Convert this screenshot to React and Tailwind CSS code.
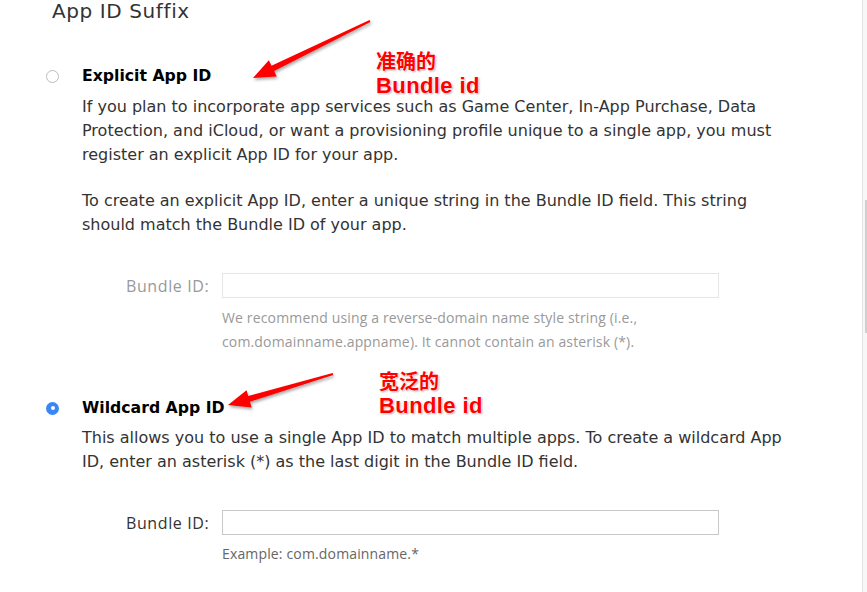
import React from 'react';

const Arrow = ({ x1, y1, x2, y2 }) => {
    // tapered shaft from tail (x1,y1) to tip (x2,y2) with a head
    const dx = x2 - x1;
    const dy = y2 - y1;
    const len = Math.hypot(dx, dy);
    const ux = dx / len;
    const uy = dy / len;
    const nx = -uy;
    const ny = ux;
    const headLen = 22;
    const headW = 9;
    const bx = x2 - ux * headLen;
    const by = y2 - uy * headLen;
    const pts = [
        [x1 + nx * 1, y1 + ny * 1],
        [bx + nx * 3, by + ny * 3],
        [bx + nx * headW, by + ny * headW],
        [x2, y2],
        [bx - nx * headW, by - ny * headW],
        [bx - nx * 3, by - ny * 3],
        [x1 - nx * 1, y1 - ny * 1],
    ].map(p => p.join(',')).join(' ');
    return (
        <svg className="absolute left-0 top-0 pointer-events-none" width="867" height="592">
            <defs>
                <filter id={`sh${x1}`} x="-20%" y="-20%" width="140%" height="140%">
                    <feDropShadow dx="1" dy="2" stdDeviation="1.5" floodColor="#000" floodOpacity="0.35" />
                </filter>
            </defs>
            <polygon points={pts} fill="#ff0000" filter={`url(#sh${x1})`} />
        </svg>
    );
};

const Note = ({ top, left, cn }) => (
    <div
        className="absolute text-[#ff0000] font-bold"
        style={{ top, left, textShadow: '0 0 2px #fff, 0 0 2px #fff, 1px 1px 2px #999' }}
    >
        <div className="text-[20px] leading-[28px] font-['Noto_Sans_CJK_SC',sans-serif]">{cn}</div>
        <div className="text-[22px] leading-[22px] font-['Liberation_Sans',Arial,sans-serif] tracking-[0.4px]">Bundle id</div>
    </div>
);

const App = () => {
    return (
        <div className="relative w-[867px] h-[592px] overflow-hidden bg-white font-['DejaVu_Sans',sans-serif] text-[#333]">
            <div className="flex h-full">
                <div className="flex-1">
                    <h2 className="pl-[52px] -mt-[3px] text-[20px] tracking-[0.6px] leading-[28px] text-[#333]">App ID Suffix</h2>

                    <div className="mt-[39px] flex items-center h-[24px]">
                        <span className="ml-[46px] w-[13px] h-[13px] rounded-full border border-[#bdbdbd] bg-white" />
                        <span className="ml-[23px] text-[15.7px] font-bold text-black">Explicit App ID</span>
                    </div>
                    <div className="pl-[82px] text-[16px] leading-[24px] text-[#333] mt-[7px]">
                        <p>If you plan to incorporate app services such as Game Center, In-App Purchase, Data<br />Protection, and iCloud, or want a provisioning profile unique to a single app, you must<br />register an explicit App ID for your app.</p>
                        <p className="mt-[22px]">To create an explicit App ID, enter a unique string in the Bundle ID field. This string<br />should match the Bundle ID of your app.</p>
                    </div>
                    <div className="mt-[36px] flex items-center">
                        <label className="ml-[126px] w-[84px] shrink-0 whitespace-nowrap font-['Open_Sans',sans-serif] text-[16px] tracking-[0.6px] text-[#999]">Bundle ID:</label>
                        <div className="ml-[12px] w-[497px] h-[25px] border border-[#e6e6e6] bg-white" />
                    </div>
                    <p className="pl-[222px] mt-[8px] font-['Open_Sans',sans-serif] text-[14px] tracking-[0.15px] leading-[24px] text-[#999]">We recommend using a reverse-domain name style string (i.e.,<br />com.domainname.appname). It cannot contain an asterisk (*).</p>

                    <div className="mt-[42px] flex items-center h-[24px]">
                        <span className="ml-[46px] w-[13px] h-[13px] rounded-full bg-[#3b86f7] flex items-center justify-center">
                            <span className="w-[4px] h-[4px] rounded-full bg-white" />
                        </span>
                        <span className="ml-[23px] text-[15.7px] font-bold text-black">Wildcard App ID</span>
                    </div>
                    <div className="pl-[82px] text-[16px] leading-[24px] text-[#333] mt-[6px]">
                        <p>This allows you to use a single App ID to match multiple apps. To create a wildcard App<br />ID, enter an asterisk (*) as the last digit in the Bundle ID field.</p>
                    </div>
                    <div className="mt-[36px] flex items-center">
                        <label className="ml-[126px] w-[84px] shrink-0 whitespace-nowrap font-['Open_Sans',sans-serif] text-[16px] tracking-[0.6px] text-[#333]">Bundle ID:</label>
                        <div className="ml-[12px] w-[497px] h-[25px] border border-[#c8c8c8] bg-white" />
                    </div>
                    <p className="pl-[222px] mt-[7px] font-['Open_Sans',sans-serif] text-[14px] tracking-[0.15px] leading-[24px] text-[#666]">Example: com.domainname.*</p>
                </div>
                <div className="w-[5px] h-full border-l border-[#e3e3e3] bg-[#f7f7f7] relative">
                    <div className="absolute right-0 top-[200px] w-[2px] h-[133px] bg-[#cfcfcf]" />
                </div>
            </div>

            <Arrow x1={370} y1={21} x2={253} y2={78} />
            <Arrow x1={333} y1={374} x2={228} y2={405} />
            <Note top={47} left={376} cn="准确的" />
            <Note top={367} left={379} cn="宽泛的" />
        </div>
    );
};

export default App;
